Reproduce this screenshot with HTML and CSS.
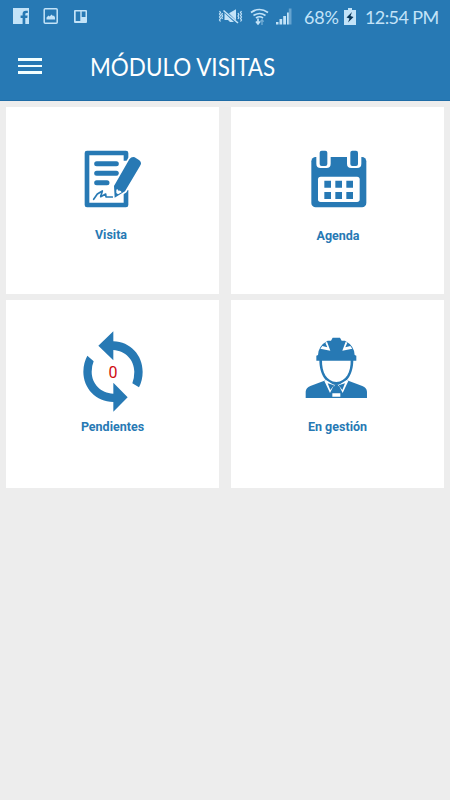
FILE: index.html
```html
<!DOCTYPE html>
<html lang="es">
<head>
<meta charset="utf-8">
<title>Módulo Visitas</title>
<link rel="stylesheet" href="styles.css">
</head>
<body>
<header class="header">
  <div class="status">
    <svg class="notifications" viewBox="0 0 90 24" width="90" height="24">
      <path fill="currentColor" fill-rule="evenodd" d="M13 8h16v16h-3.700v-6h2l.3-2.500h-2.300v-1.500q0-1 1.200-1h1.300v-2.200h-2q-3.200 0-3.200 3v1.700h-2v2.500h2v6H13z"/>
      <rect x="44.200" y="8.800" width="13" height="14.400" rx="1" fill="none" stroke="currentColor" stroke-width="1.500"/>
      <path fill="currentColor" d="M46.500 19.500v-2l2-2 1.200 1 1.800-2 1.500 1.500 1-.5 1 2v2z"/>
      <path fill="currentColor" fill-rule="evenodd" d="M75 10h11q1 0 1 1v11q0 1-1 1H75q-1 0-1-1V11q0-1 1-1zm.7 1.500v9.500h4.600v-9.500zm6 0v5.500h3.800v-5.500z"/>
    </svg>
    <div class="status-right">
      <svg viewBox="0 0 76 20" width="76" height="20" fill="none" stroke="currentColor">
        <path stroke-width="1.200" d="M1.500 4l1 1.500-1 1.500 1 1.500-1 1.500 1 1.500-1 1.500 1 1.500M4.500 6l-.8 1.500.8 1.500-.8 1.500.8 1.500M23.500 4l-1 1.500 1 1.500-1 1.500 1 1.500-1 1.500 1 1.500-1 1.500M20 6l.8 1.500-.8 1.500.8 1.500-.8 1.500"/>
        <path fill="currentColor" stroke="none" d="M6.500 6l9.500 9h-4l-2-2H6.500zM11 6.300l7-4v11z"/>
        <path stroke-width="1.600" d="M5.500 3.500L20 16"/>
        <path stroke-width="1.700" d="M33 5.500q8.500-6 17 0M35.500 8.500q6-4 12 0M38 11q3.500-2.500 7 0"/>
        <path stroke-width="1.700" d="M40 11.500v5M38 14.500l2 2.500 2-2.500"/>
        <path stroke-width="1.300" opacity=".5" d="M44 18v-5M42.300 14.700l1.700-2 1.700 2"/>
        <path fill="currentColor" stroke="none" d="M58 15h2.500v2.500H58zM61.500 12h2.700v5.500h-2.700zM65.200 9h2.800v8.500h-2.800zM69 5.500h1.800v12H69z"/>
        <path fill="currentColor" stroke="none" opacity=".4" d="M70.800 1.500h2.700v16h-2.700z"/>
      </svg>
      <span class="battery-text">68%</span>
      <svg class="battery" viewBox="0 0 12 17" width="12" height="17">
        <path fill="currentColor" d="M4 0h4v2h4v15H0V2h4z"/>
        <path fill="#073558" d="M8 4L2.500 9.500l3 1L4 14.500 9.500 9 6.500 8z"/>
      </svg>
      <span class="clock">12:54 PM</span>
    </div>
  </div>
  <div class="toolbar">
    <div class="menu"><i></i><i></i><i></i></div>
    <h1 class="title">MÓDULO VISITAS</h1>
  </div>
</header>
<main class="grid">
  <section class="card visita">
    <svg viewBox="42 30 174 174" width="58" height="58">
      <path fill="none" stroke="currentColor" stroke-width="14" stroke-linejoin="round" d="M168 62V39H51V195H168V150"/>
      <path stroke="currentColor" stroke-width="15" stroke-linecap="round" d="M80 71H139M80 100H139M80 128H111"/>
      <path fill="none" stroke="currentColor" stroke-width="5" stroke-linecap="round" stroke-linejoin="round" d="M71 178L82 162L97 153L92 170L107 162L108 171H128"/>
      <path fill="currentColor" stroke="#fff" stroke-width="10" stroke-linejoin="round" paint-order="stroke" d="M178 58Q185 49 194 52L208 61Q217 68 210 78L165 154L134 173L132 138Z"/>
      <path fill="#fff" d="M139 149Q143 146 145 152Q153 151 155 157L144 163L139 159Z"/>
    </svg>
    <span class="label">Visita</span>
  </section>
  <section class="card agenda">
    <svg viewBox="50 30 168 174" width="56" height="58">
      <rect x="51" y="51" width="165" height="151" rx="13" fill="currentColor"/>
      <path fill="#fff" d="M66 48H109V71Q109 84 96 84H79Q66 84 66 71ZM158 48H201V71Q201 84 188 84H171Q158 84 158 71Z"/>
      <rect x="76" y="32" width="23" height="46" rx="6" fill="currentColor"/>
      <rect x="168" y="32" width="23" height="46" rx="6" fill="currentColor"/>
      <rect x="71" y="110" width="125" height="76" rx="8" fill="#fff"/>
      <path fill="currentColor" d="M90 122h20v21H90zM123 122h20v21h-20zM156 122h20v21h-20zM90 156h20v21H90zM123 156h20v21h-20zM156 156h20v21h-20z"/>
    </svg>
    <span class="label">Agenda</span>
  </section>
  <section class="card pendientes">
    <div class="sync">
      <svg viewBox="38 18 180 244" width="60" height="81.300">
        <path fill="currentColor" d="M84 62L129 19V49C180 50 217 91 217 140Q217 165 206 187L186 175Q192 158 192 140C192 105 165 77 129 75V106Z"/>
        <path fill="currentColor" d="M172 217L129 260V231C77 230 39 190 39 140Q39 114 51 92L70 109Q64 123 64 140C64 176 91 204 129 206V173Z"/>
      </svg>
      <span class="count">0</span>
    </div>
    <span class="label">Pendientes</span>
  </section>
  <section class="card gestion">
    <svg viewBox="30 36 186 184" width="62" height="61.300">
      <path fill="currentColor" d="M32 219V200Q33 188 46 183L92 166H156L202 183Q215 188 216 200V219Z"/>
      <path fill="#fff" d="M71 100H178Q178 148 153 172L124 186L95 172Q70 148 71 100Z"/>
      <path fill="currentColor" d="M73 104H81C80 142 95 169 124 171C153 169 168 142 167 104H175C175 148 155 178 124 180C93 178 73 148 73 104Z"/>
      <path fill="#fff" d="M88 168L94 166L117 180L105 204ZM160 168L154 166L131 180L143 204ZM112 205h24v10h-24z"/>
      <path fill="currentColor" d="M98 175L117 181L106 195ZM150 175L131 181L142 195ZM118 179h12l-2 8 6 15h-20l6-15z"/>
      <path fill="currentColor" d="M64 107V92L69 90Q70 62 98 47L108 47L113 38H135L140 47L150 47Q178 62 179 90L184 92V107Z"/>
      <path fill="#fff" d="M76 71L82 63L97 67L91 53L96 50L106 77ZM172 71L166 63L151 67L157 53L152 50L142 77Z"/>
    </svg>
    <span class="label">En gestión</span>
  </section>
</main>
</body>
</html>
```
FILE: styles.css
```css
* { box-sizing: border-box; }
body {
  margin: 0;
  min-height: 800px;
  background: #ededed;
  color: #2779b4;
  font-family: Roboto, sans-serif;
}
svg { display: block; flex: none; }
.header {
  height: 101px;
  background: #2779b4;
  color: #fff;
  border-bottom: 1px solid #1f6ca6;
}
.status {
  display: flex;
  justify-content: space-between;
  height: 34px;
  color: #c3e3f8;
}
.status-right {
  display: flex;
  align-items: flex-start;
  padding: 7px 11px 0 0;
  font-family: Lato, sans-serif;
  font-size: 18px;
  line-height: 20px;
  white-space: nowrap;
}
.battery-text { width: 36px; margin-left: 10px; letter-spacing: -0.2px; }
.battery { margin: 1px 0 0 4px; }
.clock { width: 74px; margin-left: 9px; letter-spacing: -0.6px; }
.toolbar {
  display: flex;
  align-items: center;
  height: 64px;
  padding-left: 18px;
}
.menu {
  display: grid;
  gap: 4px;
  width: 24px;
  margin-right: 48px;
}
.menu i { height: 2.700px; background: #f3ffff; }
.title {
  margin: 2px 0 0;
  font: 400 24.500px/30px Lato, sans-serif;
  white-space: nowrap;
  transform: scaleX(0.917);
  transform-origin: left center;
}
.grid {
  display: grid;
  grid-template-columns: 213px 213px;
  grid-template-rows: 187px 188px;
  gap: 6px 12px;
  padding: 6px;
}
.card {
  display: flex;
  flex-direction: column;
  align-items: center;
  background: #fff;
}
.label {
  font-size: 12.500px;
  font-weight: 700;
  line-height: 16px;
}
.visita { padding: 43px 3px 0 0; }
.visita svg { margin-left: 4px; }
.visita .label { margin-top: 19px; }
.agenda { padding: 43px 0 0 3px; }
.agenda .label { margin: 20px 2px 0 0; }
.pendientes { padding-top: 31px; }
.pendientes .label { margin-top: 7px; }
.sync { display: grid; place-items: center; }
.sync > * { grid-area: 1 / 1; }
.count {
  padding: 2px 0 0 1px;
  color: #d00b10;
  font-size: 16px;
  line-height: 18px;
}
.gestion { padding-top: 37px; }
.gestion .label { margin-top: 21px; }
.gestion svg { margin-right: 4px; }
```
